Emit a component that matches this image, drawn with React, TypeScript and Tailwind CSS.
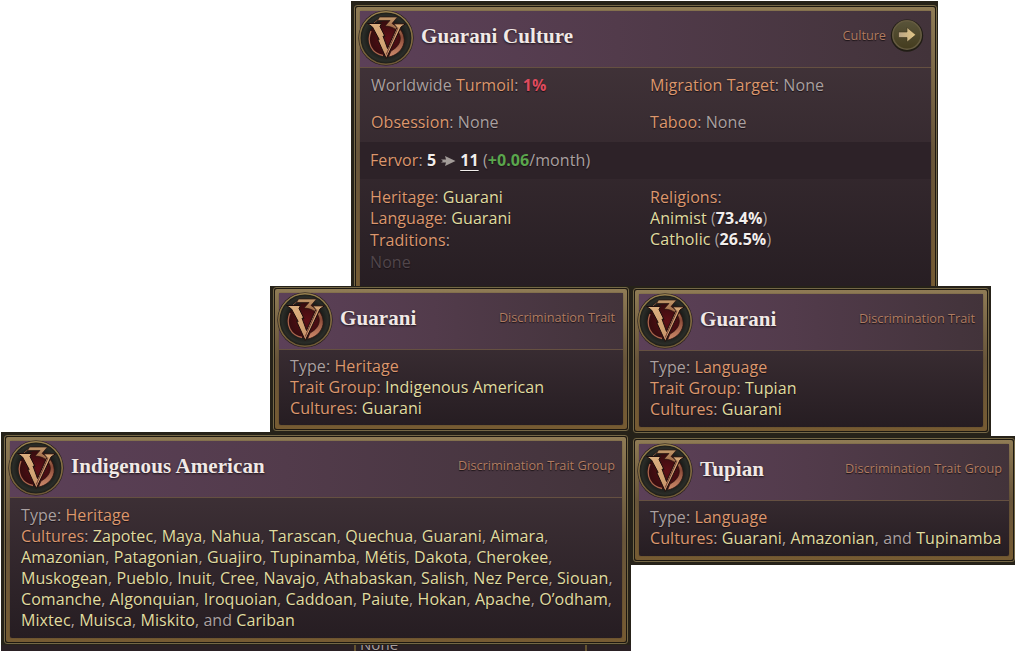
import type { ReactNode } from "react";

function Medallion() {
  return (
    <svg viewBox="0 0 56 56" className="h-14 w-14 shrink-0">
      <defs>
        <radialGradient id="face" cx="50%" cy="50%" r="50%">
          <stop offset="0.6" stopColor="#151614" />
          <stop offset="0.88" stopColor="#2b2d28" />
          <stop offset="1" stopColor="#171712" />
        </radialGradient>
        <radialGradient id="blood" cx="55%" cy="50%" r="55%">
          <stop offset="0" stopColor="#5e0f17" />
          <stop offset="1" stopColor="#330c0e" />
        </radialGradient>
        <linearGradient id="brass" x1="0" y1="0" x2="1" y2="1">
          <stop offset="0" stopColor="#dcb081" />
          <stop offset="0.5" stopColor="#d3a474" />
          <stop offset="1" stopColor="#b3745a" />
        </linearGradient>
        <linearGradient id="bronze" x1="0" y1="0" x2="0" y2="1">
          <stop offset="0" stopColor="#c39a6c" />
          <stop offset="0.22" stopColor="#a87450" />
          <stop offset="0.5" stopColor="#8a4a38" />
          <stop offset="1" stopColor="#cf8c6c" />
        </linearGradient>
        <linearGradient id="rim" x1="0" y1="0" x2="0" y2="1">
          <stop offset="0" stopColor="#98804e" />
          <stop offset="1" stopColor="#6f5937" />
        </linearGradient>
      </defs>
      <circle cx="28" cy="28" r="27.6" fill="#221b1a" />
      <circle cx="28" cy="28" r="26.2" fill="url(#face)" stroke="url(#rim)" strokeWidth="1.6" />
      <circle cx="28" cy="28.5" r="17.5" fill="url(#blood)" />
      <path d="M13 21 C8 33 14 43.5 25 45.5" fill="none" stroke="#a9654d" strokeWidth="1.3" />
      <path d="M15 14 C18 10.500 21 9 24 8.500" fill="none" stroke="#7e4e3a" strokeWidth="1" />
      <path d="M19.500 10.500 L21.500 7 H39.500 L34 13.500 C43 17.500 47 25 46 32.500 C44.500 40.500 38 45.500 30.500 47 L33 41 C39 38 42.500 33 42.300 28 C42 21 36 16.500 27 16 L32 10.500 Z" fill="url(#bronze)" stroke="#2a1310" strokeWidth="0.7" />
      <path d="M9.500 13.500 H23.500 L22 16.500 L27 26.500 L25 26 L29.500 38.500 L38.800 17.500 L35.500 13.800 H47.500 L43 17 L28.300 48.500 L19.500 29 L21.200 29.500 L14.500 17 Z" fill="url(#brass)" stroke="#1e0d0c" strokeWidth="1" />
      <path d="M40 17.800 L29.500 41.500 L28.300 44.500" fill="none" stroke="#61302a" strokeWidth="0.9" />
    </svg>
  );
}

function GoButton() {
  return (
    <svg viewBox="0 0 34 34" className="h-[34px] w-[34px] shrink-0">
      <defs>
        <linearGradient id="olive" x1="0" y1="0" x2="0" y2="1">
          <stop offset="0" stopColor="#59543a" />
          <stop offset="1" stopColor="#443c1e" />
        </linearGradient>
        <linearGradient id="arrow" x1="0" y1="0" x2="1" y2="0">
          <stop offset="0" stopColor="#b8a486" />
          <stop offset="1" stopColor="#e3c886" />
        </linearGradient>
      </defs>
      <circle cx="17" cy="17.6" r="16.2" fill="#211d15" />
      <circle cx="17" cy="17" r="14.2" fill="url(#olive)" stroke="#655b40" strokeWidth="1.6" />
      <path d="M8.500 14 H17 V9.500 L25.800 16.800 L17 24 V19.500 H8.500 Z" fill="url(#arrow)" stroke="#3a331c" strokeWidth="0.6" />
    </svg>
  );
}

function TrendArrow() {
  return (
    <svg viewBox="0 0 16 12" className="mx-1 inline-block h-3 w-4 align-[-1px]">
      <path d="M1 4.500 L6 4.500 L5 1 L15.500 6 L5 11 L6 7.500 L1 7.500 L3 6 Z" fill="#a39c99" />
    </svg>
  );
}

const Key = ({ children }: { children: ReactNode }) => <span className="text-[#dc976d]">{children}</span>;
const Link = ({ children }: { children: ReactNode }) => <span className="text-[#e0dda0]">{children}</span>;
const Strong = ({ children }: { children: ReactNode }) => (
  <b className="font-bold text-[#f2eeec]">{children}</b>
);

function Names({ items }: { items: string[] }) {
  return (
    <>
      {items.map((name) => (
        <span key={name}>
          <Link>{name}</Link>,{" "}
        </span>
      ))}
    </>
  );
}

type PanelProps = {
  title: string;
  kind: string;
  size: string;
  pad: string;
  headPad: string;
  action?: ReactNode;
  children: ReactNode;
};

function Panel({ title, kind, size, pad, headPad, action, children }: PanelProps) {
  return (
    <section className={`flex shrink-0 bg-[#262219] ${size} ${pad}`}>
      <div className="flex min-w-0 flex-1 rounded-[3px] border border-[#746746] bg-[#1d1811] p-px">
        <div className="flex min-w-0 flex-1 rounded-[2px] bg-linear-to-b from-[#8f7b55] via-[#68553a] to-[#765b32] p-1">
          <div className="flex min-w-0 flex-1 flex-col rounded-[2px] bg-linear-to-b from-[#46373d] to-[#261d22] shadow-[0_0_1px_#2b211c]">
            <header className="flex h-[57px] shrink-0 items-center border-b border-[#655041] bg-linear-to-r from-[#5c4058] via-[#523b4b] via-45% to-[#42333a]">
              <div className="-ml-[2px] -mt-[3px] flex">
                <Medallion />
              </div>
              <h2 className="-mt-[6px] ml-[7px] flex-1 whitespace-nowrap font-['Liberation_Serif',serif] text-[21px] font-bold leading-7 tracking-[0.1px] text-[#f1e9e6] [text-shadow:0_1px_2px_#1c1218]">
                {title}
              </h2>
              <div className={`-mt-[8px] flex items-center gap-1 whitespace-nowrap text-[12.7px] leading-5 tracking-normal text-[#b07c61] ${headPad}`}>
                {kind}
                {action}
              </div>
            </header>
            {children}
          </div>
        </div>
      </div>
    </section>
  );
}

export default function App() {
  return (
    <main className="h-[651px] w-[1019px] overflow-hidden bg-white pt-px font-['Open_Sans',sans-serif] text-[16px] tracking-[0.08px] text-[#aaa0a0] [text-shadow:0_1px_1px_#1a1216]">
      <div className="ml-[351px] h-[285px] w-[587px] overflow-hidden">
        <Panel title="Guarani Culture" kind="Culture" size="h-[300px] w-[587px]" pad="pl-[3px] pt-1 pr-px" headPad="pr-[7px]" action={<GoButton />}>
          <div className="grid grid-cols-[279px_1fr] gap-y-4 whitespace-nowrap pb-[9px] pl-[11px] pt-[7px] leading-[21px]">
            <p>Worldwide <Key>Turmoil</Key>: <b className="text-[#dc4b5e]">1%</b></p>
            <p><Key>Migration Target</Key>: None</p>
            <p><Key>Obsession</Key>: None</p>
            <p><Key>Taboo</Key>: None</p>
          </div>
          <div className="h-[37px] whitespace-nowrap bg-[#2d2228] pl-[10px] pt-[8px] leading-[21px]">
            <Key>Fervor</Key>: <Strong>5</Strong>
            <TrendArrow />
            <b className="text-[#f2eeec] underline underline-offset-4">11</b> (
            <b className="text-[#5ba64d]">+0.06</b>/month)
          </div>
          <div className="grid grid-cols-[280px_1fr] whitespace-nowrap pl-[10px] pt-2 leading-[21px]">
            <div>
              <p><Key>Heritage</Key>: <Link>Guarani</Link></p>
              <p><Key>Language</Key>: <Link>Guarani</Link></p>
              <p className="leading-[22px]"><Key>Traditions</Key>:</p>
              <p className="leading-[22px] text-[#51464b]">None</p>
            </div>
            <div>
              <p><Key>Religions</Key>:</p>
              <p><Link>Animist</Link> (<Strong>73.4%</Strong>)</p>
              <p><Link>Catholic</Link> (<Strong>26.5%</Strong>)</p>
            </div>
          </div>
        </Panel>
      </div>

      <div className="flex">
        <div className="flex w-[631px] flex-col items-end">
          <Panel title="Guarani" kind="Discrimination Trait" size="h-[146px] w-[361px]" pad="pl-[3px] pt-px pr-[2px] pb-px" headPad="pr-[8px]">
            <div className="whitespace-nowrap pl-[11px] pt-[6px] leading-[21px]">
              <p>Type: <Key>Heritage</Key></p>
              <p><Key>Trait Group</Key>: <Link>Indigenous American</Link></p>
              <p><Key>Cultures</Key>: <Link>Guarani</Link></p>
            </div>
          </Panel>
          <Panel title="Indigenous American" kind="Discrimination Trait Group" size="h-[213px] w-[630px]" pad="pl-[3px] pt-[3px] pr-[3px] pb-px" headPad="pr-[7px]">
            <div className="whitespace-nowrap pl-[11px] pt-[7px] leading-[21px]">
              <p>Type: <Key>Heritage</Key></p>
              <p><Key>Cultures</Key>: <Names items={["Zapotec", "Maya", "Nahua", "Tarascan", "Quechua", "Guarani", "Aimara"]} /></p>
              <p><Names items={["Amazonian", "Patagonian", "Guajiro", "Tupinamba", "Métis", "Dakota", "Cherokee"]} /></p>
              <p><Names items={["Muskogean", "Pueblo", "Inuit", "Cree", "Navajo", "Athabaskan", "Salish", "Nez Perce", "Siouan"]} /></p>
              <p><Names items={["Comanche", "Algonquian", "Iroquoian", "Caddoan", "Paiute", "Hokan", "Apache", "O’odham"]} /></p>
              <p><Names items={["Mixtec", "Muisca", "Miskito"]} />and <Link>Cariban</Link></p>
            </div>
          </Panel>
          <div className="flex h-[6px] w-[630px] overflow-hidden bg-[#2a2024]">
            <div className="w-[355px] border-r-2 border-[#65532f]" />
            <div className="flex w-[231px] items-end border-r-2 border-[#65532f] pl-1 text-[15px] leading-[14px]">None</div>
          </div>
        </div>
        <div className="flex w-[384px] flex-col items-start">
          <Panel title="Guarani" kind="Discrimination Trait" size="h-[150px] w-[360px]" pad="pl-[2px] pt-[2px] pr-[2px] pb-[3px]" headPad="pr-[8px]">
            <div className="whitespace-nowrap pl-[11px] pt-[6px] leading-[21px]">
              <p>Type: <Key>Language</Key></p>
              <p><Key>Trait Group</Key>: <Link>Tupian</Link></p>
              <p><Key>Cultures</Key>: <Link>Guarani</Link></p>
            </div>
          </Panel>
          <Panel title="Tupian" kind="Discrimination Trait Group" size="h-[129px] w-[384px]" pad="pl-[2px] pt-[2px] pb-[3px]" headPad="pr-[7px]">
            <div className="whitespace-nowrap pl-[11px] pt-[6px] leading-[21px]">
              <p>Type: <Key>Language</Key></p>
              <p><Key>Cultures</Key>: <Names items={["Guarani", "Amazonian"]} />and <Link>Tupinamba</Link></p>
            </div>
          </Panel>
        </div>
      </div>
    </main>
  );
}
